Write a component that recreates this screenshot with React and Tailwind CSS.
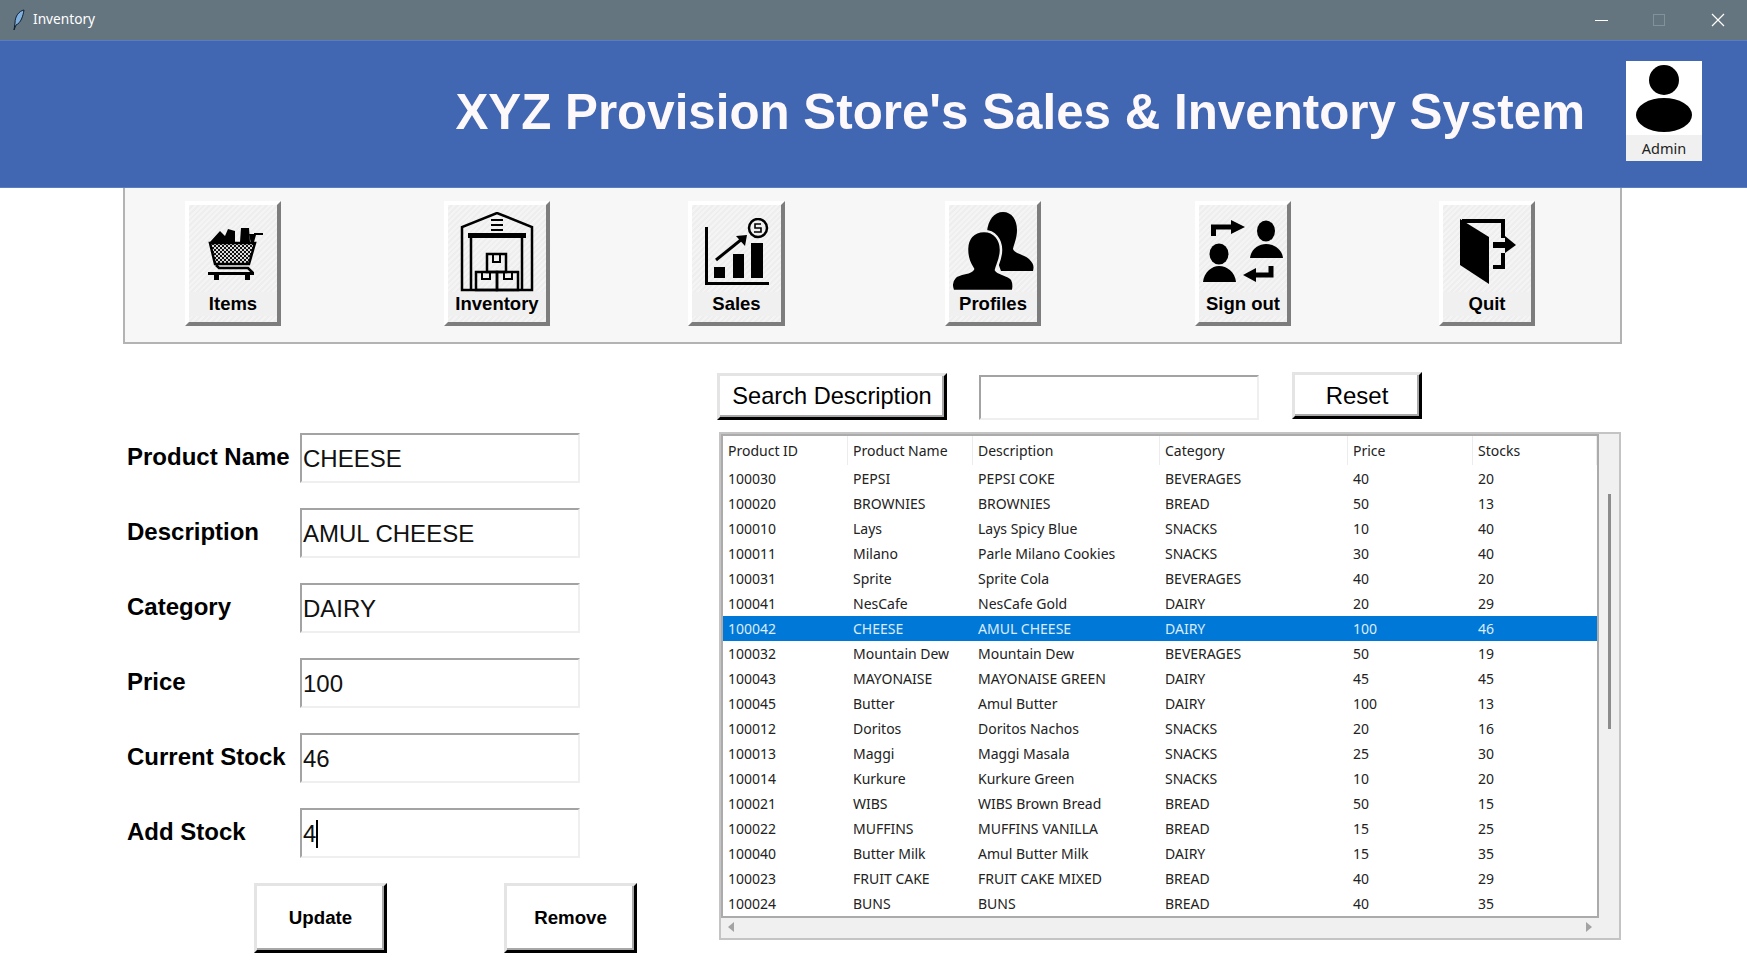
import React from "react";

const sans = "font-['Liberation_Sans',Arial,sans-serif]";

const rows = [
  ["100030", "PEPSI", "PEPSI COKE", "BEVERAGES", "40", "20"],
  ["100020", "BROWNIES", "BROWNIES", "BREAD", "50", "13"],
  ["100010", "Lays", "Lays Spicy Blue", "SNACKS", "10", "40"],
  ["100011", "Milano", "Parle Milano Cookies", "SNACKS", "30", "40"],
  ["100031", "Sprite", "Sprite Cola", "BEVERAGES", "40", "20"],
  ["100041", "NesCafe", "NesCafe Gold", "DAIRY", "20", "29"],
  ["100042", "CHEESE", "AMUL CHEESE", "DAIRY", "100", "46"],
  ["100032", "Mountain Dew", "Mountain Dew", "BEVERAGES", "50", "19"],
  ["100043", "MAYONAISE", "MAYONAISE GREEN", "DAIRY", "45", "45"],
  ["100045", "Butter", "Amul Butter", "DAIRY", "100", "13"],
  ["100012", "Doritos", "Doritos Nachos", "SNACKS", "20", "16"],
  ["100013", "Maggi", "Maggi Masala", "SNACKS", "25", "30"],
  ["100014", "Kurkure", "Kurkure Green", "SNACKS", "10", "20"],
  ["100021", "WIBS", "WIBS Brown Bread", "BREAD", "50", "15"],
  ["100022", "MUFFINS", "MUFFINS VANILLA", "BREAD", "15", "25"],
  ["100040", "Butter Milk", "Amul Butter Milk", "DAIRY", "15", "35"],
  ["100023", "FRUIT CAKE", "FRUIT CAKE MIXED", "BREAD", "40", "29"],
  ["100024", "BUNS", "BUNS", "BREAD", "40", "35"],
];

const columns = ["Product ID", "Product Name", "Description", "Category", "Price", "Stocks"];
const colWidths = ["w-[125px]", "w-[125px]", "w-[187px]", "w-[188px]", "w-[125px]", "w-[124px]"];

const fields = [
  ["Product Name", "CHEESE"],
  ["Description", "AMUL CHEESE"],
  ["Category", "DAIRY"],
  ["Price", "100"],
  ["Current Stock", "46"],
];

function CartIcon() {
  return (
    <svg width="56" height="54" viewBox="0 0 56 54" className="mb-[11px] ml-[6px]">
      <defs>
        <pattern id="mesh" width="4" height="4" patternUnits="userSpaceOnUse">
          <rect width="4" height="4" fill="#dcdcdc" />
          <rect width="2" height="2" fill="#111" />
          <rect x="2" y="2" width="2" height="2" fill="#111" />
        </pattern>
      </defs>
      <path d="M2 15 L12 4 L17 9 L20 2 L27 4 L27 15 L32 15 L33 1 L41 1 L42 15 Z" fill="#000" />
      <path d="M41 7 L46 7 L46 6 L55 6 L55 8 L48 8 L44 22 Z" fill="#000" />
      <path d="M2 16 H47 L41 37 H7 Z" fill="url(#mesh)" stroke="#000" strokeWidth="2.5" />
      <path d="M8 38 L11 41 H40 L45 46" fill="none" stroke="#000" strokeWidth="2.5" />
      <rect x="0" y="45" width="46" height="3" fill="#000" />
      <rect x="6" y="48" width="5" height="5" fill="#000" />
      <rect x="37" y="48" width="5" height="5" fill="#000" />
    </svg>
  );
}

function WarehouseIcon() {
  return (
    <svg width="74" height="80" viewBox="0 0 74 80" fill="none" stroke="#000" strokeWidth="2.5">
      <path d="M2 78 V15 L37 1 L72 15 V78 Z" />
      <path d="M31 8 H43 M31 13 H43 M31 18 H43" strokeWidth="2" />
      <rect x="8" y="21" width="58" height="5" fill="#000" stroke="none" />
      <path d="M11 26 V78 M62 26 V78" />
      <rect x="27" y="42" width="19" height="18" />
      <rect x="16" y="60" width="21" height="18" />
      <rect x="37" y="60" width="21" height="18" />
      <path d="M33 42 V50 H40 V42 M22 60 V67 H30 V60 M44 60 V67 H52 V60" strokeWidth="2" />
    </svg>
  );
}

function SalesIcon() {
  return (
    <svg width="66" height="68" viewBox="0 0 66 68" className="mb-[6px]">
      <path d="M2.5 9 V65.5 H65" fill="none" stroke="#000" strokeWidth="3" />
      <rect x="10" y="49" width="11" height="11" fill="#000" />
      <rect x="29" y="36" width="11" height="24" fill="#000" />
      <rect x="47" y="25" width="12" height="35" fill="#000" />
      <path d="M12 42 L38 21" stroke="#000" strokeWidth="3" />
      <path d="M32 18 L43 17 L41 28 Z" fill="#000" />
      <circle cx="54" cy="10" r="9" fill="none" stroke="#000" strokeWidth="2.5" />
      <path d="M57 6 H51 V10 H57 V14 H50" fill="none" stroke="#000" strokeWidth="1.6" />
    </svg>
  );
}

function ProfilesIcon() {
  return (
    <svg width="84" height="80" viewBox="0 0 84 80">
      <path d="M52 0 C61 0 66 8 66 18 C66 26 63 32 62 37 C64 42 72 42 78 47 C83 52 83 55 82 59 L50 59 L36 20 C37 8 43 0 52 0 Z" fill="#000" />
      <path d="M33 19 C44 19 50 28 50 38 C50 47 46 53 45 58 C47 62 56 62 61 67 C63 71 63 75 62 79 L2 79 C0 74 0 69 4 65 C10 60 20 62 22 57 C19 52 16 47 16 37 C16 27 22 19 33 19 Z" fill="#000" stroke="#f2f2f2" strokeWidth="2.5" />
    </svg>
  );
}

function SwapIcon() {
  return (
    <svg width="84" height="66" viewBox="0 0 84 66" className="mb-[7px]">
      <path d="M12.5 17 V8 H32" fill="none" stroke="#000" strokeWidth="5" />
      <path d="M30 1 L44 8 L30 15 Z" fill="#000" />
      <ellipse cx="65" cy="12" rx="9" ry="10.5" fill="#000" />
      <path d="M49 39 C50 30 58 25 65 25 C73 25 81 30 82 39 Z" fill="#000" />
      <ellipse cx="18" cy="35" rx="9.5" ry="10.5" fill="#000" />
      <path d="M2 63 C3 53 11 47 18 47 C26 47 34 53 35 63 Z" fill="#000" />
      <path d="M70 47 V56 H50" fill="none" stroke="#000" strokeWidth="5" />
      <path d="M55 49 L42 56 L55 63 Z" fill="#000" />
    </svg>
  );
}

function QuitIcon() {
  return (
    <svg width="60" height="68" viewBox="0 0 60 68" className="mb-[7px]">
      <path d="M3 2 L32 20 V67 L3 48 Z" fill="#000" />
      <path d="M5 4 H46 V21 M46 36 V50 H36" fill="none" stroke="#000" strokeWidth="4" />
      <path d="M36 25 H48 V19 L59 28 L48 36 V31 H36 Z" fill="#000" />
    </svg>
  );
}

function AdminIcon() {
  return (
    <svg width="58" height="68" viewBox="0 0 58 68">
      <circle cx="29" cy="15" r="15" fill="#000" />
      <ellipse cx="29" cy="50" rx="28" ry="17" fill="#000" />
    </svg>
  );
}

function Feather() {
  return (
    <svg width="12" height="22" viewBox="0 0 12 22">
      <path d="M11 1 C6 2 2 7 2 14 L1 21 L3 16 C8 14 10 7 11 1 Z" fill="#7fb0e0" stroke="#10202e" strokeWidth="1" />
    </svg>
  );
}

function ToolButton({ label, icon, className }) {
  return (
    <button
      className={`flex flex-col items-center h-[125px] border-4 border-t-white border-l-white border-r-[#7d7d7d] border-b-[#7d7d7d] bg-[#f0f0f0] bg-[repeating-linear-gradient(135deg,#f4f4f4_0px,#f4f4f4_2px,#eeeeee_2px,#eeeeee_4px)] ${className}`}
    >
      <div className="h-[87px] flex items-end justify-center shrink-0">{icon}</div>
      <div className={`${sans} font-bold text-[18.5px] leading-[24px] text-black bg-[#f0f0f0] w-full text-center`}>
        {label}
      </div>
    </button>
  );
}

function Field({ label, value, caret }) {
  return (
    <div className="flex items-center h-[50px] mb-[25px]">
      <div className={`w-[173px] mb-[2px] ${sans} font-bold text-[24px] text-black`}>{label}</div>
      <div className={`w-[280px] h-[50px] flex items-center pl-[1px] pt-[2px] border-2 border-t-[#a3a3a3] border-l-[#a3a3a3] border-r-[#efefef] border-b-[#efefef] bg-white ${sans} text-[24px] text-[#111] whitespace-nowrap`}>
        {value}
        {caret && <span className="inline-block w-[2px] h-[28px] bg-black" />}
      </div>
    </div>
  );
}

function BevelButton({ children, className }) {
  return (
    <button
      className={`flex items-center justify-center bg-white border-[3px] border-t-[#e4e4e4] border-l-[#e4e4e4] border-r-black border-b-black shadow-[inset_-2px_-2px_0_#a8a8a8] ${sans} text-black ${className}`}
    >
      {children}
    </button>
  );
}

export default function App() {
  return (
    <div className="w-[1747px] h-[963px] bg-white overflow-hidden">
      {/* title bar */}
      <div className="h-[40px] bg-[#64757f] flex items-center text-white">
        <div className="ml-[13px] w-[12px] flex">
          <Feather />
        </div>
        <div className="ml-[8px] mb-[1px] font-['Noto_Sans',sans-serif] text-[13.7px]">Inventory</div>
        <div className="ml-auto flex items-center">
          <div className="w-[13px] h-[1px] bg-white mr-[45px]" />
          <div className="w-[12px] h-[12px] border border-[#82919a] mr-[46px]" />
          <svg width="14" height="14" viewBox="0 0 14 14" className="mr-[22px]">
            <path d="M1 1 L13 13 M13 1 L1 13" stroke="#fff" strokeWidth="1.2" />
          </svg>
        </div>
      </div>

      {/* header */}
      <div className="h-[148px] bg-[#4166b2] border-y border-[#5b7cc0] flex items-center justify-end">
        <h1 className={`${sans} font-bold text-[49.3px] text-[#fdf8fa] mr-[41px] mb-[4px] whitespace-nowrap`}>
          XYZ Provision Store's Sales & Inventory System
        </h1>
        <div className="w-[76px] h-[100px] mr-[45px] mb-[7px] flex flex-col bg-white">
          <div className="h-[74px] pt-[4px] flex justify-center">
            <AdminIcon />
          </div>
          <div className="flex-1 bg-[#f0f0f0] text-center font-['Noto_Sans',sans-serif] text-[14.5px] leading-[26px] text-[#222]">
            Admin
          </div>
        </div>
      </div>

      {/* toolbar */}
      <div className="ml-[123px] w-[1499px] h-[156px] bg-[#f7f7f7] border-x-2 border-b-2 border-[#b3b3b3] flex pt-[13px]">
        <ToolButton label="Items" icon={<CartIcon />} className="ml-[60px] w-[96px]" />
        <ToolButton label="Inventory" icon={<WarehouseIcon />} className="ml-[163px] w-[106px]" />
        <ToolButton label="Sales" icon={<SalesIcon />} className="ml-[138px] w-[97px]" />
        <ToolButton label="Profiles" icon={<ProfilesIcon />} className="ml-[160px] w-[96px]" />
        <ToolButton label="Sign out" icon={<SwapIcon />} className="ml-[154px] w-[96px]" />
        <ToolButton label="Quit" icon={<QuitIcon />} className="ml-[148px] w-[96px]" />
      </div>

      <div className="flex">
        {/* form */}
        <div className="ml-[127px] w-[593px] pt-[89px]">
          {fields.map(([label, value]) => (
            <Field key={label} label={label} value={value} />
          ))}
          <Field label="Add Stock" value="4" caret />
          <div className="flex mt-[3px]">
            <BevelButton className="ml-[127px] w-[133px] h-[70px] border-4 font-bold text-[18.7px]">Update</BevelButton>
            <BevelButton className="ml-[117px] w-[133px] h-[70px] border-4 font-bold text-[18.7px]">Remove</BevelButton>
          </div>
        </div>

        {/* search and table */}
        <div className="pt-[29px]">
          <div className="flex items-start h-[59px]">
            <BevelButton className="-ml-[3px] w-[230px] h-[47px] text-[23.6px]">Search Description</BevelButton>
            <div className="ml-[32px] mt-[2px] w-[280px] h-[45px] border-2 border-t-[#a3a3a3] border-l-[#a3a3a3] border-r-[#efefef] border-b-[#efefef] bg-white" />
            <BevelButton className="ml-[33px] -mt-[1px] w-[130px] h-[47px] text-[24px]">Reset</BevelButton>
          </div>

          <div className="-ml-[1px] w-[902px] h-[508px] bg-[#f0f0f0] border-2 border-[#c4c4c4] flex flex-col">
            <div className="flex flex-1">
              <div className="w-[878px] h-[484px] bg-white border-2 border-[#ababab] font-['Noto_Sans',sans-serif] text-[14px] text-[#222]">
                <div className="flex h-[29px] items-center">
                  {columns.map((col, i) => (
                    <div key={col} className={`${colWidths[i]} h-full pl-[5px] flex items-center border-r border-[#ececec]`}>
                      {col}
                    </div>
                  ))}
                </div>
                <div className="pt-[1px]">
                  {rows.map((row) => (
                    <div
                      key={row[0]}
                      className={`flex h-[25px] items-center ${row[0] === "100042" ? "bg-[#0078d7] text-[#dcecfa]" : ""}`}
                    >
                      {row.map((cell, i) => (
                        <div key={i} className={`${colWidths[i]} pl-[5px] whitespace-nowrap`}>
                          {cell}
                        </div>
                      ))}
                    </div>
                  ))}
                </div>
              </div>
              <div className="flex-1 flex justify-center pt-[60px]">
                <div className="w-[3px] h-[235px] bg-[#8c8c8c]" />
              </div>
            </div>
            <div className="h-[20px] flex items-center justify-between w-[878px] px-[6px] pb-[2px] shrink-0">
              <svg width="8" height="10" viewBox="0 0 8 10"><path d="M7 0 V10 L1 5 Z" fill="#a3a3a3" /></svg>
              <svg width="8" height="10" viewBox="0 0 8 10"><path d="M1 0 V10 L7 5 Z" fill="#a3a3a3" /></svg>
            </div>
          </div>
        </div>
      </div>
    </div>
  );
}
